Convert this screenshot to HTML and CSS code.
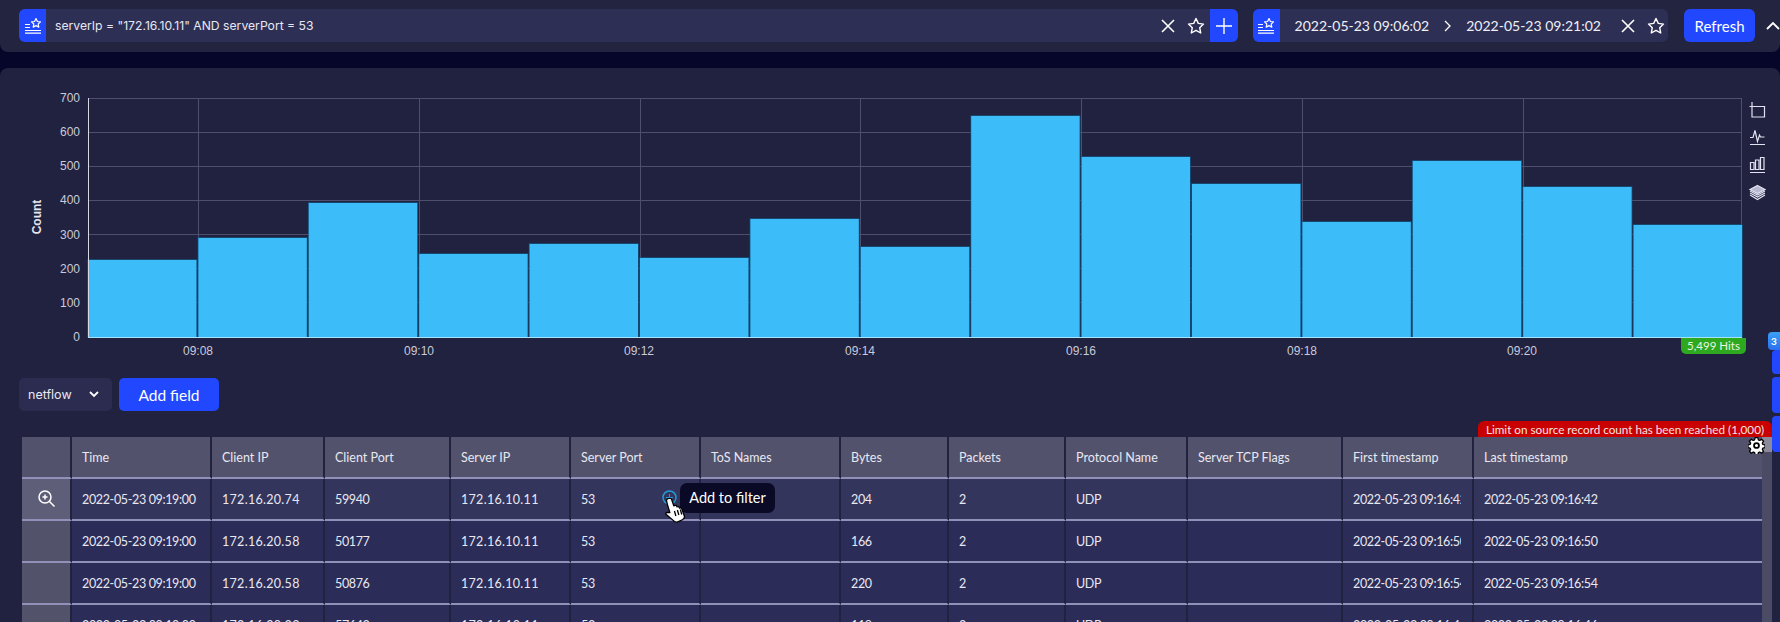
FILE: index.html
```html
<!DOCTYPE html>
<html lang="en">
<head>
    <meta charset="UTF-8">
    <meta name="viewport" content="width=device-width, initial-scale=1.0">
    <title>Netflow Search</title>
    <link rel="stylesheet" href="styles.css">
</head>
<body>
    <svg class="defs" width="0" height="0">
        <symbol id="i-saved" viewBox="0 0 16 16">
            <path d="M11 .6l1.4 2.9 3.1.4-2.3 2.1.6 3.1-2.8-1.5-2.8 1.5.6-3.1-2.3-2.1 3.1-.4z" fill="none" stroke="#fff" stroke-width="1.2" stroke-linejoin="round"/>
            <path d="M0 6.5h5M0 9.5h5M0 12.5h16M0 15.2h16" fill="none" stroke="#fff" stroke-width="1.2"/>
        </symbol>
        <symbol id="i-close" viewBox="0 0 14 14">
            <path d="M1 1l12 12M13 1L1 13" fill="none" stroke="#fff" stroke-width="1.6"/>
        </symbol>
        <symbol id="i-star" viewBox="0 0 18 18">
            <path d="M9 1.5l2.3 4.9 5.2.7-3.8 3.6 1 5.3L9 13.4 4.3 16l1-5.3L1.500 7.100l5.200-.7z" fill="none" stroke="#fff" stroke-width="1.4" stroke-linejoin="round"/>
        </symbol>
    </svg>

    <header class="topbar">
        <div class="search-box">
            <span class="saved-btn"><svg class="icon-16"><use href="#i-saved"/></svg></span>
            <span class="query-text">serverIp = "172.16.10.11" AND serverPort = 53</span>
            <svg class="icon-close"><use href="#i-close"/></svg>
            <svg class="icon-star"><use href="#i-star"/></svg>
            <span class="plus-btn">
                <svg width="16" height="16" viewBox="0 0 16 16"><path d="M8 0v16M0 8h16" stroke="#fff" stroke-width="1.4"/></svg>
            </span>
        </div>
        <div class="time-box">
            <span class="saved-btn"><svg class="icon-16"><use href="#i-saved"/></svg></span>
            <span class="time-text first">2022-05-23 09:06:02</span>
            <svg class="time-arrow" width="7" height="12" viewBox="0 0 7 12"><path d="M1 1l5 5-5 5" fill="none" stroke="#fff" stroke-width="1.3"/></svg>
            <span class="time-text">2022-05-23 09:21:02</span>
            <svg class="icon-close"><use href="#i-close"/></svg>
            <svg class="icon-star"><use href="#i-star"/></svg>
        </div>
        <button class="refresh-btn">Refresh</button>
        <svg class="collapse" width="14" height="9" viewBox="0 0 14 9"><path d="M1 8l6-6 6 6" fill="none" stroke="#fff" stroke-width="1.8"/></svg>
    </header>

    <main class="panel">
        <div class="chart">
            <svg class="chart-svg" width="1780" height="290" viewBox="0 68 1780 290">
                <g class="grid">
                    <path d="M88 98.500H1742M88 132.500H1742M88 166.500H1742M88 200.500H1742M88 234.500H1742M88 268.500H1742M88 302.500H1742"/>
                    <path d="M198.500 98V337M419.500 98V337M640.500 98V337M860.500 98V337M1081.500 98V337M1302.500 98V337M1523.500 98V337M1741.500 98V337"/>
                </g>
                <g class="bars">
                    <rect x="88" y="260" width="108.400" height="77"/>
                    <rect x="198.400" y="238" width="108.400" height="99"/>
                    <rect x="308.800" y="203" width="108.400" height="134"/>
                    <rect x="419.200" y="254" width="108.400" height="83"/>
                    <rect x="529.600" y="244" width="108.400" height="93"/>
                    <rect x="640" y="258" width="108.400" height="79"/>
                    <rect x="750.400" y="219" width="108.400" height="118"/>
                    <rect x="860.800" y="247" width="108.400" height="90"/>
                    <rect x="971.200" y="116" width="108.400" height="221"/>
                    <rect x="1081.600" y="157" width="108.400" height="180"/>
                    <rect x="1192" y="184" width="108.400" height="153"/>
                    <rect x="1302.400" y="222" width="108.400" height="115"/>
                    <rect x="1412.800" y="161" width="108.400" height="176"/>
                    <rect x="1523.200" y="187" width="108.400" height="150"/>
                    <rect x="1633.600" y="225" width="108.400" height="112"/>
                </g>
                <path class="axis-y" d="M88.500 98V337"/>
                <path class="axis-x" d="M88 337.500H1742"/>
                <g class="y-labels">
                    <text x="80" y="102">700</text>
                    <text x="80" y="136">600</text>
                    <text x="80" y="170">500</text>
                    <text x="80" y="204">400</text>
                    <text x="80" y="239">300</text>
                    <text x="80" y="273">200</text>
                    <text x="80" y="307">100</text>
                    <text x="80" y="341">0</text>
                </g>
                <g class="x-labels">
                    <text x="198" y="355">09:08</text>
                    <text x="419" y="355">09:10</text>
                    <text x="639" y="355">09:12</text>
                    <text x="860" y="355">09:14</text>
                    <text x="1081" y="355">09:16</text>
                    <text x="1302" y="355">09:18</text>
                    <text x="1522" y="355">09:20</text>
                </g>
                <text class="y-title" transform="translate(41 217) rotate(-90)">Count</text>
                <g class="chart-tools">
                    <path d="M1749.500 106.500h15v10.500h-12.500v-15"/>
                    <path d="M1750 144.500h15M1750 137.500h3l2-7 2.500 11 2-6.500 1 2h4"/>
                    <path d="M1750.500 162.500v7h3.500v-7zM1755.500 160v9.500h3.500v-9.500zM1760.500 157.500v12h3.500v-12zM1750 172.500h15"/>
                    <path class="layer-top" d="M1757.500 185.500l7.500 4-7.500 4-7.500-4z"/>
                    <path d="M1750 191l7.500 4 7.500-4M1750 193l7.500 4 7.500-4M1750 195l7.500 4.500 7.500-4.500"/>
                </g>
            </svg>
            <span class="hits">5,499 Hits</span>
        </div>

        <div class="table-tools">
            <div class="type-select">
                <span>netflow</span>
                <svg width="10" height="7" viewBox="0 0 10 7"><path d="M1 1l4 4 4-4" fill="none" stroke="#fff" stroke-width="1.8"/></svg>
            </div>
            <button class="add-field">Add field</button>
        </div>

        <div class="table-wrap">
            <span class="limit-note">Limit on source record count has been reached (1,000)</span>
            <table class="results">
                <colgroup>
                    <col class="c-open"><col class="c-time"><col class="c-cip"><col class="c-cport">
                    <col class="c-sip"><col class="c-sport"><col class="c-tos"><col class="c-bytes">
                    <col class="c-packets"><col class="c-proto"><col class="c-flags"><col class="c-first"><col>
                </colgroup>
                <thead>
                    <tr>
                        <th></th>
                        <th>Time</th>
                        <th>Client IP</th>
                        <th>Client Port</th>
                        <th>Server IP</th>
                        <th>Server Port</th>
                        <th>ToS Names</th>
                        <th>Bytes</th>
                        <th>Packets</th>
                        <th>Protocol Name</th>
                        <th>Server TCP Flags</th>
                        <th>First timestamp</th>
                        <th>Last timestamp</th>
                    </tr>
                </thead>
                <tbody>
                    <tr class="hovered">
                        <td class="open-cell">
                            <svg width="17" height="17" viewBox="0 0 17 17"><circle cx="7" cy="7" r="6" fill="none" stroke="#fff" stroke-width="1.500"/><path d="M11.500 11.500l5 5M7 4.500v5M4.500 7h5" stroke="#fff" stroke-width="1.500" fill="none"/></svg>
                        </td>
                        <td><div class="cell">2022-05-23 09:19:00</div></td>
                        <td><div class="cell ip">172.16.20.74</div></td>
                        <td><div class="cell">59940</div></td>
                        <td><div class="cell ip">172.16.10.11</div></td>
                        <td><div class="cell">53</div></td>
                        <td></td>
                        <td><div class="cell">204</div></td>
                        <td><div class="cell">2</div></td>
                        <td><div class="cell">UDP</div></td>
                        <td></td>
                        <td><div class="cell">2022-05-23 09:16:42</div></td>
                        <td><div class="cell">2022-05-23 09:16:42</div></td>
                    </tr>
                    <tr>
                        <td class="open-cell"></td>
                        <td><div class="cell">2022-05-23 09:19:00</div></td>
                        <td><div class="cell ip">172.16.20.58</div></td>
                        <td><div class="cell">50177</div></td>
                        <td><div class="cell ip">172.16.10.11</div></td>
                        <td><div class="cell">53</div></td>
                        <td></td>
                        <td><div class="cell">166</div></td>
                        <td><div class="cell">2</div></td>
                        <td><div class="cell">UDP</div></td>
                        <td></td>
                        <td><div class="cell">2022-05-23 09:16:50</div></td>
                        <td><div class="cell">2022-05-23 09:16:50</div></td>
                    </tr>
                    <tr>
                        <td class="open-cell"></td>
                        <td><div class="cell">2022-05-23 09:19:00</div></td>
                        <td><div class="cell ip">172.16.20.58</div></td>
                        <td><div class="cell">50876</div></td>
                        <td><div class="cell ip">172.16.10.11</div></td>
                        <td><div class="cell">53</div></td>
                        <td></td>
                        <td><div class="cell">220</div></td>
                        <td><div class="cell">2</div></td>
                        <td><div class="cell">UDP</div></td>
                        <td></td>
                        <td><div class="cell">2022-05-23 09:16:54</div></td>
                        <td><div class="cell">2022-05-23 09:16:54</div></td>
                    </tr>
                    <tr>
                        <td class="open-cell"></td>
                        <td><div class="cell">2022-05-23 09:19:00</div></td>
                        <td><div class="cell ip">172.16.20.33</div></td>
                        <td><div class="cell">57643</div></td>
                        <td><div class="cell ip">172.16.10.11</div></td>
                        <td><div class="cell">53</div></td>
                        <td></td>
                        <td><div class="cell">118</div></td>
                        <td><div class="cell">2</div></td>
                        <td><div class="cell">UDP</div></td>
                        <td></td>
                        <td><div class="cell">2022-05-23 09:16:46</div></td>
                        <td><div class="cell">2022-05-23 09:16:46</div></td>
                    </tr>
                </tbody>
            </table>
            <div class="scrollbar"><div class="thumb"></div></div>
            <svg class="gear" width="17" height="17" viewBox="0 0 24 24">
                <path d="M10 1h4l.6 3.100 2 .8 2.600-1.800 2.800 2.800-1.800 2.600.8 2 3 .5v4l-3 .6-.8 2 1.800 2.600-2.800 2.800-2.600-1.800-2 .8-.6 3h-4l-.6-3-2-.8-2.600 1.800-2.800-2.800 1.800-2.600-.8-2-3-.6v-4l3-.5.8-2L1.900 5.900l2.800-2.800 2.600 1.800 2-.8z" fill="#fff" stroke="#000" stroke-width="1.800" stroke-linejoin="round"/>
                <circle cx="12" cy="12" r="3.500" fill="#fff" stroke="#000" stroke-width="2.500"/>
            </svg>
            <svg class="add-icon" width="15" height="15" viewBox="0 0 15 15"><circle cx="7.500" cy="7.500" r="6.500" fill="none" stroke="#1f9ad6" stroke-width="1.500"/><path d="M7.500 4v7M4 7.500h7" stroke="#1f9ad6"/></svg>
            <div class="tooltip">Add to filter</div>
            <svg class="hand" width="24" height="26" viewBox="0 0 22 26" preserveAspectRatio="none">
                <path d="M5.500 1.500c1.200-.6 2.200.1 2.500 1.200l2 6.300.6-.4c.8-.5 1.700-.2 2 .6l.3.700c.7-.6 1.700-.3 2 .5l.3.800c.8-.5 1.700-.1 2 .7l2.300 6.800c.5 1.700-.2 3.200-1.700 4l-3.700 1.900c-1.500.7-3 .4-4.200-.7l-6.900-6.400c-.8-.8-.3-2 .7-2.100l2.600.2-2.300-8.300-.7-3.200c-.2-1 .2-1.900 1.100-2.400z" fill="#fff" stroke="#000" stroke-width="1.200" stroke-linejoin="round"/>
                <path d="M10.500 14l1.300 5M13.200 13l1.300 5M15.900 12.500l1.300 5" stroke="#000" stroke-width="1.200" fill="none"/>
            </svg>
        </div>

        <div class="side-tabs">
            <span class="side-badge">3</span>
            <span class="side-tab first-tab"></span>
            <span class="side-tab"></span>
            <span class="side-tab"></span>
        </div>
    </main>
</body>
</html>
```

FILE: styles.css
```css
* {
    box-sizing: border-box;
}
html, body {
    height: 622px;
    overflow: hidden;
}
body {
    margin: 0;
    background-color: #05062a;
    color: #fff;
    font-family: "Lato", sans-serif;
}
.defs {
    position: absolute;
}
.topbar {
    display: flex;
    align-items: flex-start;
    height: 52px;
    padding: 9px 0 0 19px;
    background-color: #23243f;
    border-radius: 0 0 8px 8px;
}
.search-box, .time-box {
    display: flex;
    align-items: center;
    height: 33px;
    background-color: #2e2f55;
    border-radius: 6px;
    overflow: hidden;
}
.search-box {
    width: 1220px;
}
.time-box {
    width: 416px;
    margin-left: 15px;
}
.saved-btn {
    display: flex;
    align-items: center;
    justify-content: center;
    flex: none;
    width: 27px;
    height: 33px;
    background-color: #2148ff;
}
.icon-16 {
    width: 16px;
    height: 16px;
}
.icon-close {
    flex: none;
    width: 14px;
    height: 14px;
}
.icon-star {
    flex: none;
    width: 18px;
    height: 18px;
    margin-left: 12px;
}
.query-text {
    flex: 1;
    margin-left: 9px;
    font-family: "Inter", sans-serif;
    font-size: 12.2px;
    color: #e8e8f2;
}
.plus-btn {
    display: flex;
    align-items: center;
    justify-content: center;
    width: 28px;
    height: 33px;
    margin-left: 5px;
    background-color: #2148ff;
}
.time-text {
    font-size: 14px;
    color: #f0f0f6;
}
.time-text.first {
    margin-left: 15px;
}
.time-arrow {
    margin: 0 15px;
}
.time-box .icon-close {
    margin-left: 20px;
}
.refresh-btn {
    width: 71px;
    height: 33px;
    margin-left: 16px;
    border: none;
    border-radius: 6px;
    background-color: #2148ff;
    color: #fff;
    font-family: "Lato", sans-serif;
    font-size: 15px;
}
.collapse {
    margin: 12px 0 0 11px;
}
.panel {
    position: relative;
    margin-top: 16px;
    height: 554px;
    background-color: #21223f;
    border-radius: 8px 8px 0 0;
}
.chart {
    position: relative;
    height: 290px;
}
.chart-svg {
    display: block;
}
.grid path {
    fill: none;
    stroke: #4e4f6c;
    stroke-width: 1;
}
.bars rect {
    fill: #3dbcfa;
    stroke: #14547f;
    stroke-width: 1.5;
    paint-order: stroke;
}
.axis-y {
    stroke: #d8d8e4;
    fill: none;
}
.axis-x {
    stroke: #a6e2fb;
    fill: none;
}
.y-labels text, .x-labels text {
    font-family: "Liberation Sans", sans-serif;
    font-size: 12px;
    fill: #c9cadb;
}
.y-labels text {
    text-anchor: end;
}
.x-labels text {
    text-anchor: middle;
}
.y-title {
    font-family: "Liberation Sans", sans-serif;
    font-size: 12px;
    font-weight: bold;
    fill: #e6e6ee;
    text-anchor: middle;
}
.chart-tools path {
    fill: none;
    stroke: #e2e2f2;
    stroke-width: 1.2;
}
.chart-tools .layer-top {
    fill: #b9b9d2;
}
.hits {
    position: absolute;
    left: 1681px;
    top: 270px;
    width: 65px;
    height: 16px;
    background-color: #2ea81f;
    border-radius: 0 0 5px 5px;
    font-size: 11.5px;
    line-height: 16px;
    text-align: center;
    color: #e8f6e4;
}
.table-tools {
    display: flex;
    gap: 7px;
    margin: 20px 0 0 19px;
}
.type-select {
    display: flex;
    align-items: center;
    justify-content: space-between;
    width: 93px;
    height: 33px;
    padding: 0 13px 0 9px;
    background-color: #2b2c4f;
    border-radius: 5px;
    font-family: "Inter", sans-serif;
    font-size: 12.5px;
    color: #e8e8f2;
}
.add-field {
    width: 100px;
    height: 33px;
    border: none;
    border-radius: 5px;
    background-color: #2148ff;
    color: #fff;
    font-family: "Lato", sans-serif;
    font-size: 15.5px;
}
.table-wrap {
    position: relative;
    display: flex;
    margin: 26px 0 0 22px;
    width: 1750px;
}
.results {
    width: 1740px;
    flex: none;
    table-layout: fixed;
    border-collapse: separate;
    border-spacing: 0;
    font-size: 12.5px;
}
.c-open { width: 50px; }
.c-time { width: 140px; }
.c-cip { width: 113px; }
.c-cport { width: 126px; }
.c-sip { width: 120px; }
.c-sport { width: 130px; }
.c-tos { width: 140px; }
.c-bytes { width: 108px; }
.c-packets { width: 117px; }
.c-proto { width: 122px; }
.c-flags { width: 155px; }
.c-first { width: 131px; }
.results th, .results td {
    height: 42px;
    padding: 0 0 0 10px;
    border-right: 2px solid #21223f;
    border-bottom: 2px solid #9090b8;
    text-align: left;
    font-weight: 400;
    white-space: nowrap;
}
.results th:last-child, .results td:last-child {
    border-right: none;
}
.results th {
    background-color: #52526d;
    color: #e8e8f0;
}
.results td {
    background-color: #2b2c57;
    color: #e8e8f2;
}
.results .hovered td {
    background-color: #34355c;
}
.results td.open-cell {
    padding: 0;
    background-color: #52526b;
    text-align: center;
    vertical-align: middle;
}
.results .hovered td.open-cell {
    background-color: #5e5e78;
}
.open-cell svg {
    display: inline-block;
    vertical-align: middle;
    margin-top: -2px;
}
.cell {
    overflow: hidden;
    margin-right: 11px;
    letter-spacing: -.35px;
}
.cell.ip {
    letter-spacing: .3px;
}
.scrollbar {
    flex: none;
    width: 10px;
    height: 185px;
    background-color: #4b4b66;
}
.thumb {
    height: 15px;
    background-color: #8a8a9a;
}
.limit-note {
    position: absolute;
    left: 1456px;
    top: -16px;
    width: 294px;
    height: 16px;
    background-color: #c80000;
    border-radius: 6px 6px 0 0;
    font-size: 11.7px;
    line-height: 16px;
    text-align: center;
    color: #f6e4e4;
}
.gear {
    position: absolute;
    left: 1726px;
    top: 0;
}
.add-icon {
    position: absolute;
    left: 640px;
    top: 53px;
}
.tooltip {
    position: absolute;
    left: 658px;
    top: 46px;
    width: 95px;
    height: 30px;
    background-color: #0a0a26;
    border-radius: 7px;
    font-size: 14.5px;
    line-height: 30px;
    text-align: center;
}
.hand {
    position: absolute;
    left: 641px;
    top: 60px;
}
.side-tabs {
    position: absolute;
    right: 0;
    top: 264px;
    width: 12px;
    display: flex;
    flex-direction: column;
    align-items: flex-end;
    gap: 3px;
}
.side-badge {
    position: relative;
    z-index: 1;
    width: 12px;
    height: 18px;
    margin-bottom: -3px;
    border-radius: 4px 0 0 4px;
    background: linear-gradient(#3aa0f5, #2a70f0);
    font-size: 10px;
    font-weight: 700;
    line-height: 18px;
    text-align: center;
}
.side-tab {
    width: 8px;
    height: 36px;
    border-radius: 4px 0 0 4px;
    background-color: #2148ff;
}
.first-tab {
    height: 24px;
}
```
